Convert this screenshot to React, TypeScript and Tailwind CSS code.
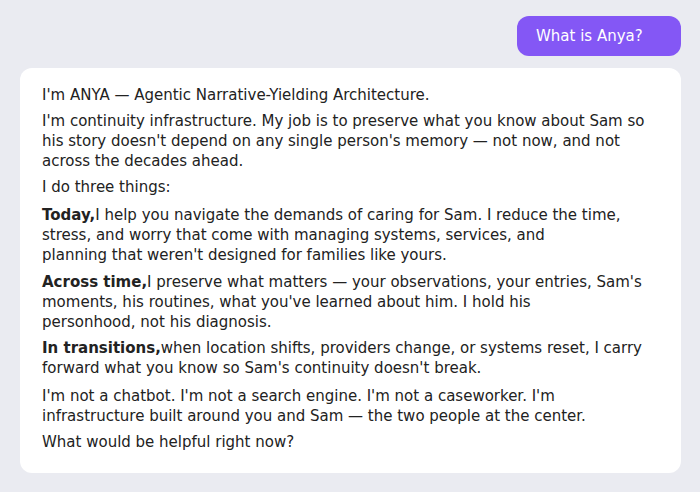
export default function App() {
  return (
    <div
      className="min-h-[492px] w-full bg-[#eaebf1] pl-5 pr-[19px] pt-4 text-[15px] leading-5 text-[#222222]"
      style={{ fontFamily: '"DejaVu Sans", sans-serif' }}
    >
      <div className="flex justify-end">
        <div className="w-[164px] rounded-[12px] bg-[#8457f5] pl-[19px] py-[10px] text-white">
          What is Anya?
        </div>
      </div>
      <div className="mt-3 rounded-[12px] bg-white pl-[22px] pr-[22px] pt-[17px] pb-[21px]">
        <p>I'm ANYA — Agentic Narrative-Yielding Architecture.</p>
        <p className="mt-[6px]">
          I'm continuity infrastructure. My job is to preserve what you know about Sam so his story doesn't depend on any single person's memory — not now, and not across the decades ahead.
        </p>
        <p className="mt-[6px]">I do three things:</p>
        <p className="mt-[8px]">
          <strong className="font-bold">Today,</strong>I help you navigate the demands of caring for Sam. I reduce the time, stress, and worry that come with managing systems, services, and
          <br />
          planning that weren't designed for families like yours.
        </p>
        <p className="mt-[7px]">
          <strong className="font-bold">Across time,</strong>I preserve what matters — your observations, your entries, Sam's moments, his routines, what you've learned about him. I hold his
          <br />
          personhood, not his diagnosis.
        </p>
        <p className="mt-[6px]">
          <strong className="font-bold">In transitions,</strong>when location shifts, providers change, or systems reset, I carry forward what you know so Sam's continuity doesn't break.
        </p>
        <p className="mt-[8px]">
          I'm not a chatbot. I'm not a search engine. I'm not a caseworker. I'm infrastructure built around you and Sam — the two people at the center.
        </p>
        <p className="mt-[6px]">What would be helpful right now?</p>
      </div>
    </div>
  );
}
